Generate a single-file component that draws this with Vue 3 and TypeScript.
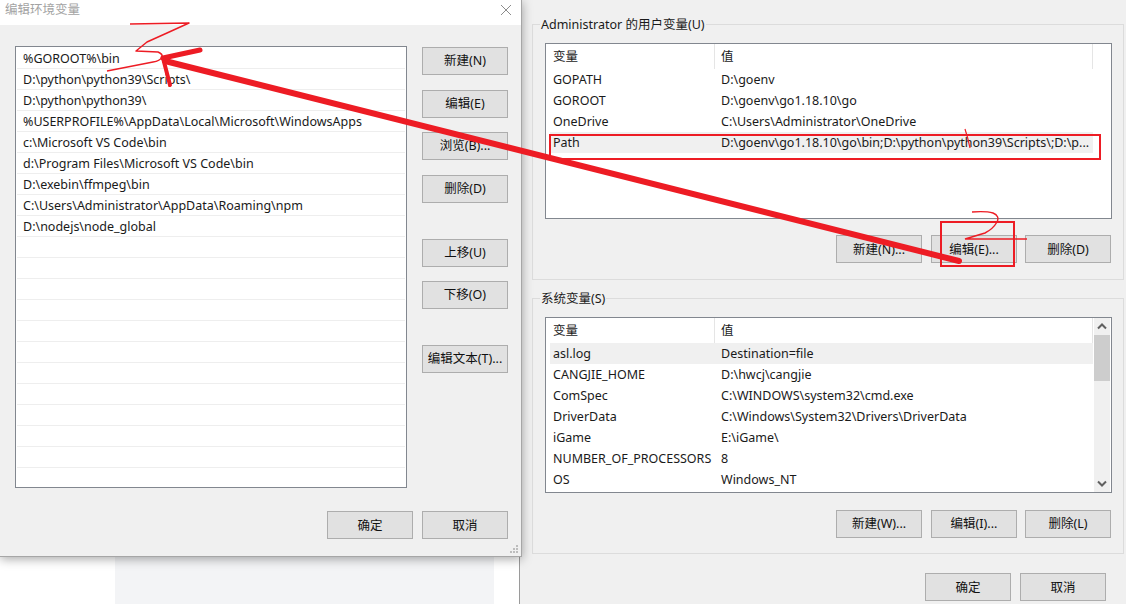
<script setup lang="ts">
interface Row { name: string; value: string; selected?: boolean }
interface Group {
  legend: string
  rows: Row[]
  scroll: boolean
  actions: string[]
}

const paths: string[] = [
  '%GOROOT%\\bin',
  'D:\\python\\python39\\Scripts\\',
  'D:\\python\\python39\\',
  '%USERPROFILE%\\AppData\\Local\\Microsoft\\WindowsApps',
  'c:\\Microsoft VS Code\\bin',
  'd:\\Program Files\\Microsoft VS Code\\bin',
  'D:\\exebin\\ffmpeg\\bin',
  'C:\\Users\\Administrator\\AppData\\Roaming\\npm',
  'D:\\nodejs\\node_global',
  '', '', '', '', '', '', '', '', '', '', '', ''
]

const sideButtons: string[] = ['新建(N)', '编辑(E)', '浏览(B)...', '删除(D)', '上移(U)', '下移(O)', '编辑文本(T)...']

const groups: Group[] = [
  {
    legend: 'Administrator 的用户变量(U)',
    scroll: false,
    actions: ['新建(N)...', '编辑(E)...', '删除(D)'],
    rows: [
      { name: 'GOPATH', value: 'D:\\goenv' },
      { name: 'GOROOT', value: 'D:\\goenv\\go1.18.10\\go' },
      { name: 'OneDrive', value: 'C:\\Users\\Administrator\\OneDrive' },
      { name: 'Path', value: 'D:\\goenv\\go1.18.10\\go\\bin;D:\\python\\python39\\Scripts\\;D:\\p...', selected: true }
    ]
  },
  {
    legend: '系统变量(S)',
    scroll: true,
    actions: ['新建(W)...', '编辑(I)...', '删除(L)'],
    rows: [
      { name: 'asl.log', value: 'Destination=file', selected: true },
      { name: 'CANGJIE_HOME', value: 'D:\\hwcj\\cangjie' },
      { name: 'ComSpec', value: 'C:\\WINDOWS\\system32\\cmd.exe' },
      { name: 'DriverData', value: 'C:\\Windows\\System32\\Drivers\\DriverData' },
      { name: 'iGame', value: 'E:\\iGame\\' },
      { name: 'NUMBER_OF_PROCESSORS', value: '8' },
      { name: 'OS', value: 'Windows_NT' }
    ]
  }
]
</script>

<template>
  <div class="desktop">
    <div class="backdrop">
      <div class="back-white"></div>
      <div class="back-gray"></div>
      <div class="back-white narrow"></div>
    </div>

    <main class="env-window">
      <section v-for="g in groups" :key="g.legend" class="group">
        <span class="legend">{{ g.legend }}</span>
        <div class="table" :class="{ scrolled: g.scroll }">
          <div class="table-main">
            <div class="thead">
              <span class="col-name">变量</span>
              <span class="col-value">值</span>
            </div>
            <div v-for="r in g.rows" :key="r.name" class="trow" :class="{ selected: r.selected }">
              <span class="col-name">{{ r.name }}</span>
              <span class="col-value">{{ r.value }}</span>
            </div>
          </div>
          <div class="scrollbar" :class="{ hidden: !g.scroll }">
            <template v-if="g.scroll">
              <svg class="arrow" width="16" height="17" viewBox="0 0 16 17"><path d="M4 10.5 8 6.5l4 4" fill="none" stroke="#606060" stroke-width="2" /></svg>
              <div class="thumb"></div>
              <div class="track"></div>
              <svg class="arrow" width="16" height="17" viewBox="0 0 16 17"><path d="M4 6.5 8 10.5l4-4" fill="none" stroke="#606060" stroke-width="2" /></svg>
            </template>
          </div>
        </div>
        <div class="group-actions">
          <button v-for="a in g.actions" :key="a" class="btn">{{ a }}</button>
        </div>
      </section>
      <footer class="window-footer">
        <button class="btn">确定</button>
        <button class="btn">取消</button>
      </footer>
    </main>

    <div class="dialog">
      <header class="dialog-title">
        <span>编辑环境变量</span>
        <svg width="12" height="12" viewBox="0 0 12 12"><path d="M1 1l10 10M11 1 1 11" stroke="#8c8c8c" stroke-width="1" fill="none" /></svg>
      </header>
      <div class="dialog-body">
        <div class="path-list">
          <div v-for="(p, i) in paths" :key="i" class="path-row">{{ p }}</div>
        </div>
        <div class="side-buttons">
          <button v-for="b in sideButtons" :key="b" class="btn">{{ b }}</button>
        </div>
      </div>
      <footer class="dialog-footer">
        <button class="btn">确定</button>
        <button class="btn">取消</button>
      </footer>
      <svg class="grip" width="10" height="10" viewBox="0 0 10 10" fill="#bdbdbd">
        <rect x="7" y="0" width="2" height="2" /><rect x="4" y="3" width="2" height="2" /><rect x="7" y="3" width="2" height="2" />
        <rect x="1" y="6" width="2" height="2" /><rect x="4" y="6" width="2" height="2" /><rect x="7" y="6" width="2" height="2" />
      </svg>
    </div>

    <svg class="marks" width="1126" height="604" viewBox="0 0 1126 604" fill="none" stroke="#ed1c24">
      <rect x="550" y="135" width="550" height="24" stroke-width="2" />
      <rect x="941" y="222" width="73" height="44" stroke-width="2" />
      <path d="M965 129q3 9 5 19" stroke-width="1.2" />
      <path d="M972 212q14-1 21 1 7 3 4 9-4 7-12 11l-20 6h62" stroke-width="1.4" />
      <path d="M130 24 189 23l-22 10-20 9-11 9 22 1q5 2 4 5-2 4-9 5l-46 9" stroke-width="1.5" stroke-linejoin="round" />
      <path d="M959 261 165 61" stroke-width="6" stroke-linecap="round" />
      <path d="M200 50 163 58" stroke-width="5" stroke-linecap="round" />
      <path d="M163 58l7 27" stroke-width="4" stroke-linecap="round" />
    </svg>
  </div>
</template>

<style>
html, body { margin: 0; padding: 0; overflow: hidden; }
</style>

<style scoped>
.desktop {
  position: relative;
  display: flex;
  width: 1126px;
  height: 604px;
  overflow: hidden;
  background: #fff;
  color: #1a1a1a;
  font: 12.5px/21px "Noto Sans", "Noto Sans CJK SC", sans-serif;
}
.backdrop { display: flex; width: 519px; flex: none; }
.back-white { width: 115px; background: #fff; }
.back-white.narrow { width: 25px; }
.back-gray { width: 379px; background: #f3f4f6; }

.env-window {
  flex: 1;
  display: flex;
  flex-direction: column;
  gap: 18px;
  padding: 24px 2px 0 12px;
  background: #f0f0f0;
  border-left: 1px solid #9a9a9a;
}
.group {
  position: relative;
  box-sizing: border-box;
  height: 256px;
  padding: 18px 11px 0 12px;
  border: 1px solid #dcdcdc;
}
.legend {
  position: absolute;
  left: 7px;
  top: -11px;
  padding: 0 1px;
  background: #f0f0f0;
}
.table {
  box-sizing: border-box;
  display: flex;
  height: 176px;
  padding: 0 1px 0 4px;
  background: #fff;
  border: 1px solid #82878f;
}
.table-main { flex: 1; min-width: 0; }
.thead {
  display: flex;
  height: 25px;
  align-items: center;
  box-shadow: inset -1px 0 #e5e5e5;
}
.trow { display: flex; height: 21px; white-space: nowrap; }
.trow.selected { background: #f0f0f0; }
.col-name { box-sizing: border-box; width: 171px; flex: none; padding-left: 3px; }
.thead .col-name { width: 165px; margin-right: 6px; line-height: 25px; border-right: 1px solid #e5e5e5; }
.scrollbar {
  display: flex;
  flex-direction: column;
  width: 16px;
  margin-left: 1px;
  background: #f0f0f0;
}
.scrollbar.hidden { background: transparent; }
.arrow { display: block; flex: none; }
.thumb { height: 46px; flex: none; background: #cdcdcd; }
.track { flex: 1; }
.group-actions { display: flex; justify-content: flex-end; gap: 8px; margin-top: 16px; padding-right: 1px; }
.group-actions .btn:nth-child(2) { margin-left: 1px; }
.group:nth-of-type(2) .group-actions { margin-top: 17px; }
.btn {
  box-sizing: border-box;
  width: 86px;
  height: 28px;
  padding: 0;
  flex: none;
  font: inherit;
  color: #111;
  background: #e1e1e1;
  border: 1px solid #adadad;
  border-radius: 0;
}
.side-buttons .btn,
.group:nth-of-type(2) .btn { padding-bottom: 2px; }
.window-footer { display: flex; justify-content: flex-end; gap: 9px; margin: 1px 18px 0 0; }

.dialog {
  position: absolute;
  left: 0;
  top: 0;
  box-sizing: border-box;
  display: flex;
  flex-direction: column;
  width: 522px;
  height: 557px;
  background: #f0f0f0;
  border-right: 1px solid #a6a6a6;
  border-bottom: 1px solid #a6a6a6;
  box-shadow: 0 2px 10px rgba(0, 0, 0, 0.35);
}
.dialog-title {
  display: flex;
  align-items: center;
  justify-content: space-between;
  flex: none;
  height: 25px;
  padding: 0 9px 6px 5px;
  box-sizing: border-box;
  background: #fff;
  color: #a3a3a3;
}
.dialog-body { display: flex; gap: 15px; padding: 21px 13px 0 15px; flex: none; }
.path-list {
  box-sizing: border-box;
  width: 392px;
  height: 442px;
  padding: 1px 1px 0;
  overflow: hidden;
  background: #fff;
  border: 1px solid #82878f;
}
.path-row {
  box-sizing: border-box;
  height: 21px;
  padding-left: 6px;
  white-space: nowrap;
  border-bottom: 1px solid #eeeeee;
}
.side-buttons { display: flex; flex-direction: column; padding-top: 1px; }
.side-buttons .btn + .btn { margin-top: 15px; }
.side-buttons .btn:nth-child(3) { margin-top: 14px; }
.side-buttons .btn:nth-child(5) { margin-top: 36px; }
.side-buttons .btn:nth-child(6) { margin-top: 14px; }
.side-buttons .btn:nth-child(7) { margin-top: 36px; }
.dialog-footer { display: flex; justify-content: flex-end; gap: 9px; padding: 23px 13px 0 0; }
.grip { position: absolute; right: 2px; bottom: 1px; }

.marks { position: absolute; left: 0; top: 0; pointer-events: none; }
</style>
